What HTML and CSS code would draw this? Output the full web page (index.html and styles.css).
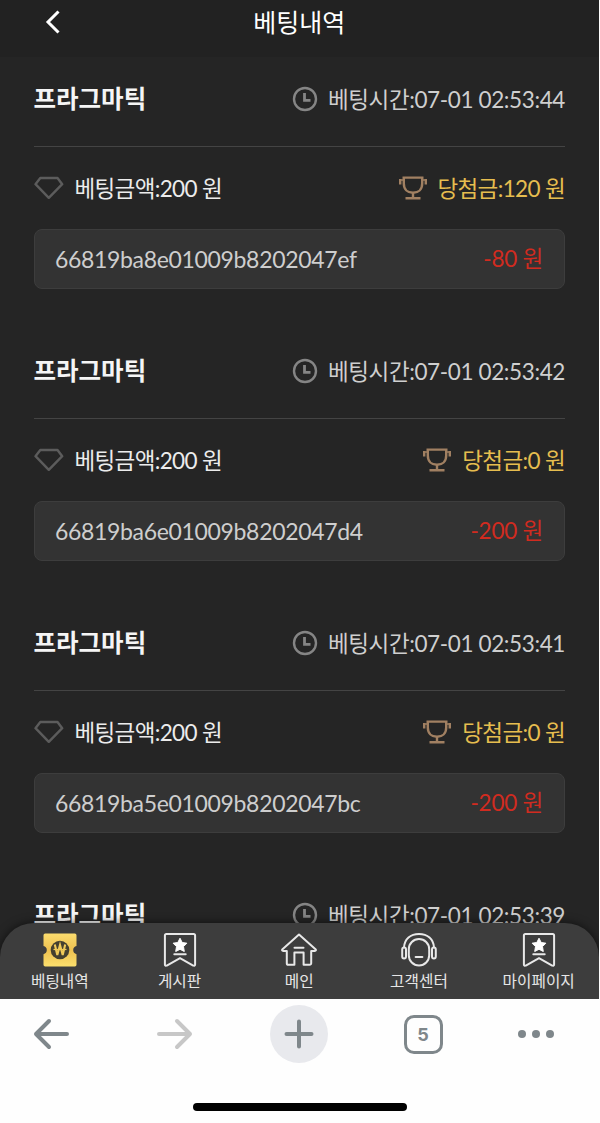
FILE: index.html
```html
<!DOCTYPE html>
<html lang="ko">
<head>
    <meta charset="UTF-8">
    <meta name="viewport" content="width=device-width, initial-scale=1.0">
    <title>베팅내역</title>
    <link rel="stylesheet" href="styles.css">
</head>
<body>
    <!-- shared icons -->
    <svg class="icon-defs" width="0" height="0">
        <symbol id="icon-clock" viewBox="0 0 26 26">
            <circle cx="13" cy="13" r="11" fill="none" stroke="#858585" stroke-width="2.4"/>
            <path d="M12.5 7v7.3h6" fill="none" stroke="#858585" stroke-width="2.8"/>
        </symbol>
        <symbol id="icon-diamond" viewBox="0 0 30 24">
            <path d="M6.3 2h17.2l4.7 6.2L14.800 21.800 1.500 8.200z" fill="none" stroke="#5c5c5c" stroke-width="2.4" stroke-linejoin="round"/>
        </symbol>
        <symbol id="icon-cup" viewBox="0 0 30 26">
            <g fill="none" stroke="#a18062" stroke-width="2.4">
                <path d="M4.500 2.600h21M5.800 2v6.500c0 6 4 9.300 9.200 9.300s9.200-3.300 9.200-9.300V2M15 17.800v5M7.500 23.300h15"/>
                <path d="M2.200 4v5.500M27.800 4v5.500"/>
                <path d="M2 5h3.500M24.500 5H28" stroke-width="1.500"/>
            </g>
        </symbol>
        <symbol id="icon-bookmark" viewBox="0 0 36 36">
            <path d="M2.900 3.500a1.500 1.500 0 0 1 1.500-1.500h27.200a1.500 1.500 0 0 1 1.500 1.500v29c0 1.100-.9 1.600-1.900 1L18 26.200 4.800 33.500c-1 .6-1.900.1-1.900-1z" fill="none" stroke="#e8e8e8" stroke-width="2"/>
            <path d="M18 6.200l2.200 4.300 4.700.7-3.400 3.400.8 4.900-4.300-2.200-4.300 2.200.8-4.900-3.400-3.400 4.700-.7z" fill="#fff" stroke="#fff" stroke-linejoin="round"/>
            <path d="M12.300 22.200h11.400" stroke="#e8e8e8" stroke-width="2" stroke-linecap="round"/>
        </symbol>
    </svg>

    <div class="app">
        <header class="header">
            <a href="#" class="back">
                <svg width="16" height="26" viewBox="0 0 16 26"><path d="M14.500 2.500L4 13l10.500 10.500" fill="none" stroke="#fff" stroke-width="3"/></svg>
            </a>
            <h1 class="title">베팅내역</h1>
        </header>

        <main class="list">
            <section class="record">
                <div class="row top">
                    <h2 class="name">프라그마틱</h2>
                    <div class="info time"><svg class="clock"><use href="#icon-clock"/></svg><span>베팅시간:07-01 02:53:44</span></div>
                </div>
                <div class="row amounts">
                    <div class="info bet"><svg class="diamond"><use href="#icon-diamond"/></svg><span>베팅금액:200 원</span></div>
                    <div class="info win"><svg class="cup"><use href="#icon-cup"/></svg><span>당첨금:120 원</span></div>
                </div>
                <div class="row box">
                    <span class="bet-id">66819ba8e01009b8202047ef</span>
                    <span class="loss">-80 원</span>
                </div>
            </section>
            <section class="record">
                <div class="row top">
                    <h2 class="name">프라그마틱</h2>
                    <div class="info time"><svg class="clock"><use href="#icon-clock"/></svg><span>베팅시간:07-01 02:53:42</span></div>
                </div>
                <div class="row amounts">
                    <div class="info bet"><svg class="diamond"><use href="#icon-diamond"/></svg><span>베팅금액:200 원</span></div>
                    <div class="info win"><svg class="cup"><use href="#icon-cup"/></svg><span>당첨금:0 원</span></div>
                </div>
                <div class="row box">
                    <span class="bet-id">66819ba6e01009b8202047d4</span>
                    <span class="loss">-200 원</span>
                </div>
            </section>
            <section class="record">
                <div class="row top">
                    <h2 class="name">프라그마틱</h2>
                    <div class="info time"><svg class="clock"><use href="#icon-clock"/></svg><span>베팅시간:07-01 02:53:41</span></div>
                </div>
                <div class="row amounts">
                    <div class="info bet"><svg class="diamond"><use href="#icon-diamond"/></svg><span>베팅금액:200 원</span></div>
                    <div class="info win"><svg class="cup"><use href="#icon-cup"/></svg><span>당첨금:0 원</span></div>
                </div>
                <div class="row box">
                    <span class="bet-id">66819ba5e01009b8202047bc</span>
                    <span class="loss">-200 원</span>
                </div>
            </section>
            <section class="record">
                <div class="row top">
                    <h2 class="name">프라그마틱</h2>
                    <div class="info time"><svg class="clock"><use href="#icon-clock"/></svg><span>베팅시간:07-01 02:53:39</span></div>
                </div>
            </section>
        </main>

        <nav class="tabbar">
            <a href="#" class="tab">
                <svg class="tab-icon" viewBox="0 0 36 36">
                    <defs>
                        <linearGradient id="gold" x1="0" y1="0" x2="0" y2="1">
                            <stop offset="0" stop-color="#fbdc6e"/>
                            <stop offset=".5" stop-color="#eec150"/>
                            <stop offset="1" stop-color="#fbdf6d"/>
                        </linearGradient>
                    </defs>
                    <path d="M3.200 1.500h29.600a1.700 1.700 0 0 1 1.700 1.700V14a4.200 4.200 0 0 0 0 8.200v10.600a1.700 1.700 0 0 1-1.700 1.700H3.200a1.700 1.700 0 0 1-1.700-1.700V22.200a4.200 4.200 0 0 0 0-8.200V3.200a1.700 1.700 0 0 1 1.700-1.700z" fill="url(#gold)"/>
                    <circle cx="18" cy="18" r="9.300" fill="#45402f"/>
                    <path d="M12.800 12.500l2.500 10.500L18 13l2.700 10 2.500-10.500" fill="none" stroke="#efc958" stroke-width="2.100"/>
                    <path d="M11.500 17.500h13" stroke="#efc958" stroke-width="1.200"/>
                </svg>
                <span>베팅내역</span>
            </a>
            <a href="#" class="tab">
                <svg class="tab-icon"><use href="#icon-bookmark"/></svg>
                <span>게시판</span>
            </a>
            <a href="#" class="tab">
                <svg class="tab-icon" viewBox="0 0 36 36">
                    <g fill="none" stroke="#e8e8e8" stroke-width="2" stroke-linejoin="round" stroke-linecap="round">
                        <path d="M18 2.500L1.500 17.200c-.8.900-.4 1.700.7 1.700h3.600v12.300a1.600 1.600 0 0 0 1.600 1.600h6V20.500h9.200v12.300h6a1.600 1.600 0 0 0 1.600-1.600V18.900h3.600c1.100 0 1.500-.8.700-1.700z"/>
                        <path d="M13.500 15.800h9"/>
                    </g>
                </svg>
                <span>메인</span>
            </a>
            <a href="#" class="tab">
                <svg class="tab-icon" viewBox="0 0 36 36">
                    <g fill="none" stroke="#e8e8e8" stroke-width="2">
                        <path d="M3 15.500C3.500 7 9.500 2 18 2s14.500 5 15 13.500"/>
                        <rect x="1.200" y="15.500" width="3.800" height="11" rx="1.900"/>
                        <rect x="31" y="15.500" width="3.800" height="11" rx="1.900"/>
                        <rect x="7.800" y="7" width="20.400" height="26.500" rx="10.200"/>
                        <path d="M14.600 25h6.800" stroke-linecap="round"/>
                    </g>
                </svg>
                <span>고객센터</span>
            </a>
            <a href="#" class="tab">
                <svg class="tab-icon"><use href="#icon-bookmark"/></svg>
                <span>마이페이지</span>
            </a>
        </nav>
    </div>

    <footer class="browser">
        <div class="controls">
            <svg width="38" height="32" viewBox="0 0 38 32"><path d="M35 16H4M17 3L4 16l13 13" fill="none" stroke="#7f878b" stroke-width="4" stroke-linecap="round" stroke-linejoin="round"/></svg>
            <svg width="38" height="32" viewBox="0 0 38 32"><path d="M3 16h31M21 3l13 13-13 13" fill="none" stroke="#c7c7c7" stroke-width="4" stroke-linecap="round" stroke-linejoin="round"/></svg>
            <div class="plus">
                <svg width="32" height="32" viewBox="0 0 32 32"><path d="M3.500 16h25M16 3.500v25" stroke="#7f878b" stroke-width="4" stroke-linecap="round"/></svg>
            </div>
            <div class="tabs-count">5</div>
            <svg width="38" height="10" viewBox="0 0 38 10" fill="#7f878b"><circle cx="5" cy="5" r="4"/><circle cx="19" cy="5" r="4"/><circle cx="33" cy="5" r="4"/></svg>
        </div>
        <div class="home-bar"></div>
    </footer>
</body>
</html>
```
FILE: styles.css
```css
* {
    box-sizing: border-box;
}
body {
    font-family: "Lato", "Noto Sans CJK KR", sans-serif;
    background: #fefefe;
    margin: 0;
}
svg {
    display: block;
    flex-shrink: 0;
}
a {
    color: inherit;
    text-decoration: none;
}
.icon-defs {
    position: absolute;
}
.app {
    position: relative;
    width: 598.5px;
    height: 998.5px;
    background: #252525;
    overflow: hidden;
}
.header {
    display: grid;
    grid-template-columns: 60px 1fr 60px;
    align-items: center;
    height: 57px;
    padding: 0 0 13px;
    background: #222;
}
.back {
    justify-self: end;
}
.title {
    margin: 0;
    color: #fff;
    font-size: 25px;
    font-weight: 400;
    line-height: 43px;
    text-align: center;
}
.list {
    padding: 0 33.5px;
}
.record {
    height: 272px;
}
.row {
    display: flex;
    align-items: center;
    justify-content: space-between;
}
.top {
    height: 90px;
    padding-top: 2px;
    padding-bottom: 8px;
    border-bottom: 1px solid #444;
}
.name {
    margin: 0;
    color: #f5f5f5;
    font-size: 24.5px;
    font-weight: 700;
    line-height: 30px;
}
.info {
    display: flex;
    align-items: center;
    font-size: 22.5px;
    line-height: 30px;
    white-space: nowrap;
}
.info span {
    padding-top: 1px;
}
.time {
    gap: 10px;
    color: #cfcfcf;
    letter-spacing: -0.38px;
}
.time span {
    padding-top: 2px;
}
.bet {
    gap: 11px;
    color: #ececec;
    letter-spacing: -0.65px;
}
.win {
    gap: 10px;
    color: #e6bd4f;
    letter-spacing: -0.65px;
}
.clock {
    width: 26px;
    height: 26px;
}
.diamond {
    width: 30px;
    height: 24px;
}
.cup {
    width: 30px;
    height: 26px;
}
.amounts {
    height: 82px;
}
.box {
    height: 60px;
    padding: 0 21px 0 20.5px;
    background: #333;
    border: 1px solid #3d3d3d;
    border-radius: 8px;
}
.bet-id {
    color: #cecece;
    font-size: 23px;
    letter-spacing: -0.33px;
}
.loss {
    color: #d12b20;
    font-size: 22.5px;
    line-height: 30px;
    letter-spacing: -0.25px;
}
.tabbar {
    position: absolute;
    left: 0;
    right: 0;
    bottom: 0;
    display: flex;
    height: 76px;
    background: #3d3d3d;
    border-radius: 34px 34px 0 0;
    box-shadow: 0 0 10px rgba(0, 0, 0, 0.6);
}
.tab {
    flex: 1;
    display: flex;
    flex-direction: column;
    align-items: center;
    padding-top: 9px;
    color: #e6e6e6;
    font-size: 15.7px;
    line-height: 20px;
    white-space: nowrap;
}
.tab-icon {
    width: 36px;
    height: 36px;
    margin-bottom: 3px;
}
.browser {
    display: flex;
    flex-direction: column;
    align-items: center;
    height: 124px;
}
.controls {
    display: grid;
    grid-template-columns: 102px 146px 102px 146px 80px;
    align-items: center;
    justify-items: center;
    width: 100%;
    height: 71px;
}
.plus {
    display: flex;
    align-items: center;
    justify-content: center;
    width: 58px;
    height: 58px;
    background: #e8e9ed;
    border-radius: 50%;
}
.tabs-count {
    width: 39px;
    height: 39px;
    border: 3px solid #7f878b;
    border-radius: 10px;
    color: #7f878b;
    font-family: "Inter", sans-serif;
    font-size: 18px;
    font-weight: 700;
    line-height: 34px;
    text-align: center;
}
.home-bar {
    width: 214px;
    height: 8px;
    margin-top: 33px;
    background: #000;
    border-radius: 4px;
}
```
